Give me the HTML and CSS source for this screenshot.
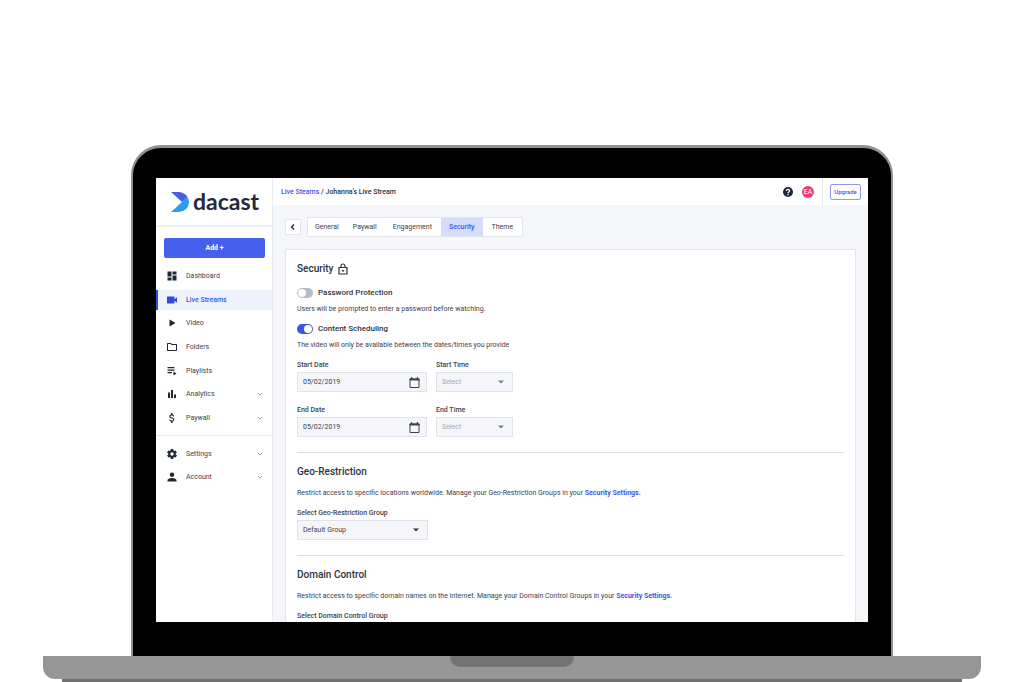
FILE: index.html
```html
<!DOCTYPE html>
<html lang="en">
<head>
<meta charset="utf-8">
<title>Dacast – Security</title>
<link rel="stylesheet" href="styles.css">
</head>
<body>
<div class="stage">
  <div class="lid">
    <div class="screen">
      <aside class="sidebar">
        <div class="brand">
          <svg class="brand-mark" viewBox="0 0 18 20" aria-hidden="true">
            <path fill="#2a9df0" d="M0 20 11 10 16 4.500Q18 7 18 10 17.500 19 8 20Z"/>
            <path fill="#4a5fe4" d="M0 0H8Q13.500 .5 16.300 4.500L11 10Z"/>
          </svg>
          <span class="brand-name">dacast</span>
        </div>
        <button class="add" type="button">Add +</button>
        <nav class="menu menu-main">
          <a class="item" href="#"><svg viewBox="0 0 24 24"><path d="M3 13h8V3H3v10zm0 8h8v-6H3v6zm10 0h8V11h-8v10zm0-18v6h8V3h-8z"/></svg><span>Dashboard</span></a>
          <a class="item active" href="#"><svg viewBox="0 0 24 24"><path d="M17 10.500V6c0-.6-.4-1-1-1H3c-.6 0-1 .4-1 1v12c0 .6.400 1 1 1h13c.6 0 1-.4 1-1v-4.500l5 4v-11z"/></svg><span>Live Streams</span></a>
          <a class="item" href="#"><svg viewBox="0 0 24 24"><path d="M7 5v14l12-7z"/></svg><span>Video</span></a>
          <a class="item" href="#"><svg viewBox="0 0 24 24"><path d="M9.200 6l2 2H20v10H4V6h5.200M10 4H4c-1.100 0-2 .9-2 2v12c0 1.100.900 2 2 2h16c1.100 0 2-.9 2-2V8c0-1.100-.9-2-2-2h-8z"/></svg><span>Folders</span></a>
          <a class="item" href="#"><svg viewBox="0 0 24 24"><path d="M3 4h14v2.500H3zM3 9h14v2.500H3zM3 14h9v2.500H3zM15 13l6 4-6 4z"/></svg><span>Playlists</span></a>
          <a class="item" href="#"><svg viewBox="0 0 24 24"><path d="M4 9h4v11H4zM10 4h4v16h-4zM16 13h4v7h-4z"/></svg><span>Analytics</span><svg class="chev" viewBox="0 0 6 6"><path d="M1 2l2 2 2-2"/></svg></a>
          <a class="item" href="#"><svg viewBox="0 0 24 24"><path d="M11.800 10.900c-2.270-.59-3-1.200-3-2.150 0-1.090 1.010-1.850 2.700-1.850 1.780 0 2.440.85 2.500 2.100h2.210c-.07-1.720-1.120-3.300-3.210-3.810V2h-3v3.160c-1.940.42-3.500 1.680-3.500 3.610 0 2.310 1.910 3.460 4.700 4.130 2.500.6 3 1.480 3 2.410 0 .69-.49 1.790-2.700 1.790-2.060 0-2.870-.92-2.980-2.100H6.320c.12 2.190 1.760 3.420 3.680 3.830V22h3v-3.150c1.950-.37 3.500-1.500 3.500-3.550 0-2.840-2.430-3.810-4.700-4.400z"/></svg><span>Paywall</span><svg class="chev" viewBox="0 0 6 6"><path d="M1 2l2 2 2-2"/></svg></a>
        </nav>
        <nav class="menu menu-more">
          <a class="item" href="#"><svg viewBox="0 0 24 24"><path fill-rule="evenodd" d="M19.400 13c.1-.7.100-1.300 0-2l2.100-1.600c.2-.2.200-.4.100-.6l-2-3.500c-.1-.2-.4-.3-.6-.2l-2.500 1c-.5-.4-1.100-.7-1.700-1l-.4-2.600c0-.3-.2-.5-.5-.5h-4c-.2 0-.4.200-.5.400l-.4 2.700c-.6.200-1.100.6-1.700 1l-2.500-1c-.2-.1-.5 0-.6.200l-2 3.500c-.1.200 0 .5.100.6L4.600 11c-.1.700-.1 1.300 0 2l-2.100 1.600c-.2.200-.2.400-.1.600l2 3.500c.1.200.4.300.6.200l2.500-1c.5.400 1.100.7 1.700 1l.4 2.600c0 .3.200.5.500.5h4c.2 0 .5-.2.500-.4l.4-2.700c.6-.2 1.100-.6 1.700-1l2.500 1c.2.100.5 0 .6-.2l2-3.500c.1-.2.100-.5-.1-.6zM12 15.500a3.500 3.500 0 110-7 3.500 3.500 0 010 7z"/></svg><span>Settings</span><svg class="chev" viewBox="0 0 6 6"><path d="M1 2l2 2 2-2"/></svg></a>
          <a class="item" href="#"><svg viewBox="0 0 24 24"><path d="M12 12a4.500 4.500 0 100-9 4.500 4.500 0 000 9zm0 2c-3 0-9 1.500-9 4.500V21h18v-2.500c0-3-6-4.500-9-4.500z"/></svg><span>Account</span><svg class="chev" viewBox="0 0 6 6"><path d="M1 2l2 2 2-2"/></svg></a>
        </nav>
      </aside>

      <div class="content">
        <header class="topbar">
          <div class="crumbs"><a href="#">Live Steams</a> / Johanna’s Live Stream</div>
          <svg class="help" viewBox="0 0 20 20" role="img" aria-label="Help"><circle cx="10" cy="10" r="10" fill="#1c2738"/><path d="M6.800 8a3.200 3.200 0 116.400 0c0 2-3.200 2.200-3.200 4.500" fill="none" stroke="#fff" stroke-width="2.400"/><circle cx="10" cy="15.500" r="1.500" fill="#fff"/></svg>
          <span class="avatar">EA</span>
          <div class="upgrade-slot"><button class="upgrade" type="button">Upgrade</button></div>
        </header>

        <div class="tabbar">
          <button class="back" type="button" aria-label="Back"><svg viewBox="0 0 8 8"><path d="M5 1.500L2.500 4 5 6.500"/></svg></button>
          <nav class="tabs">
            <a class="tab" href="#">General</a>
            <a class="tab" href="#">Paywall</a>
            <a class="tab tab-wide" href="#">Engagement</a>
            <a class="tab current" href="#">Security</a>
            <a class="tab tab-wide" href="#">Theme</a>
          </nav>
        </div>

        <main class="card">
          <section class="block">
            <h2>Security <svg class="lock" viewBox="0 0 10 12"><path d="M1 4.500h8v6.500H1zM3 4.500V3a2 2 0 014 0v1.500" fill="none" stroke="#2b3240" stroke-width="1.200"/><circle cx="5" cy="7.800" r="1" fill="#2b3240"/></svg></h2>
            <label class="toggle"><input type="checkbox" role="switch"><span>Password Protection</span></label>
            <p>Users will be prompted to enter a password before watching.</p>
            <label class="toggle toggle-next"><input type="checkbox" role="switch" checked><span>Content Scheduling</span></label>
            <p>The video will only be available between the dates/times you provide</p>
            <div class="fields">
              <div class="field">
                <label for="sd">Start Date</label>
                <div class="control"><input id="sd" type="text" value="05/02/2019"><svg class="cal" viewBox="0 0 10 11"><path d="M.5 2h9v8.500h-9z" fill="none" stroke="#3c424e"/><path d="M0 1.500h10V3.500H0zM1.500 0h1.200v2H1.500zM7.300 0h1.200v2H7.300z" fill="#3c424e"/></svg></div>
              </div>
              <div class="field">
                <label for="st">Start Time</label>
                <div class="control muted"><select id="st"><option>Select</option></select><svg class="caret" viewBox="0 0 6 4"><path d="M0 .5h6L3 3.500z"/></svg></div>
              </div>
              <div class="field">
                <label for="ed">End Date</label>
                <div class="control"><input id="ed" type="text" value="05/02/2019"><svg class="cal" viewBox="0 0 10 11"><path d="M.5 2h9v8.500h-9z" fill="none" stroke="#3c424e"/><path d="M0 1.500h10V3.500H0zM1.500 0h1.200v2H1.500zM7.300 0h1.200v2H7.300z" fill="#3c424e"/></svg></div>
              </div>
              <div class="field">
                <label for="et">End Time</label>
                <div class="control muted"><select id="et"><option>Select</option></select><svg class="caret" viewBox="0 0 6 4"><path d="M0 .5h6L3 3.500z"/></svg></div>
              </div>
            </div>
          </section>
          <section class="block">
            <h2>Geo-Restriction</h2>
            <p>Restrict access to specific locations worldwide. Manage your Geo-Restriction Groups in your <a href="#">Security Settings.</a></p>
            <div class="field field-single">
              <label for="geo">Select Geo-Restriction Group</label>
              <div class="control"><select id="geo"><option>Default Group</option></select><svg class="caret" viewBox="0 0 6 4"><path d="M0 .5h6L3 3.500z"/></svg></div>
            </div>
          </section>
          <section class="block">
            <h2>Domain Control</h2>
            <p>Restrict access to specific domain names on the internet. Manage your Domain Control Groups in your <a href="#">Security Settings.</a></p>
            <div class="field field-single">
              <label for="dom">Select Domain Control Group</label>
              <div class="control"><select id="dom"><option>Default Group</option></select><svg class="caret" viewBox="0 0 6 4"><path d="M0 .5h6L3 3.500z"/></svg></div>
            </div>
          </section>
        </main>
      </div>
    </div>
  </div>
  <div class="base"><div class="notch"></div></div>
  <div class="foot"></div>
</div>
</body>
</html>
```
FILE: styles.css
```css
* { box-sizing: border-box; }
body {
  margin: 0;
  background: #fff;
  font-family: Roboto, "Liberation Sans", sans-serif;
  font-size: 7px;
  line-height: 10px;
  color: #3c424e;
}
a { color: #3d55ea; text-decoration: none; }
button, input, select { font: inherit; color: inherit; margin: 0; }
svg { display: block; flex: none; }

/* Laptop */
.stage {
  display: flex;
  flex-direction: column;
  align-items: center;
  height: 100vh;
  padding-top: 145px;
  overflow: hidden;
}
.lid {
  flex: 1;
  min-height: 0;
  display: flex;
  width: calc(100% - 262px);
  padding: 30px 23px 34px;
  background: #000;
  border: 2px solid #929292;
  border-top-width: 3px;
  border-bottom: 0;
  border-radius: 30px 30px 0 0;
}
.screen {
  flex: 1;
  display: flex;
  overflow: hidden;
  background: #f5f6fa;
}
.base {
  display: flex;
  justify-content: center;
  width: calc(100% - 86px);
  height: 23px;
  background: #969696;
  border-radius: 0 0 12px 12px;
}
.notch {
  width: 124px;
  height: 11px;
  background: #737373;
  border-radius: 0 0 10px 10px;
}
.foot { width: calc(100% - 124px); height: 3px; background: #737070; }

/* Sidebar */
.sidebar {
  flex: none;
  width: 117px;
  background: #fff;
  border-right: 1px solid #e9ebf0;
}
.brand {
  display: flex;
  align-items: center;
  gap: 4px;
  height: 49px;
  padding-left: 15px;
  border-bottom: 2px solid #eeeff2;
}
.brand-mark { width: 18px; height: 20px; }
.brand-name {
  padding-bottom: 2px;
  font-family: Lato, sans-serif;
  font-size: 23px;
  font-weight: 700;
  line-height: 24px;
  color: #1f2a3a;
}
.add {
  display: block;
  width: calc(100% - 15px);
  height: 20px;
  margin: 11px 7px 8px 8px;
  padding: 0;
  border: 0;
  border-radius: 2px;
  background: #4660ee;
  color: #fff;
  font-weight: 700;
}
.menu { display: flex; flex-direction: column; justify-content: space-between; }
.menu-main { height: 162px; }
.menu-more {
  height: 52px;
  margin-top: 7px;
  padding-top: 8px;
  border-top: 1px solid #e6e8ee;
}
.item {
  display: flex;
  align-items: center;
  gap: 8px;
  height: 20px;
  padding: 0 9px 0 8px;
  border-left: 2px solid transparent;
  color: #3c424e;
}
.item svg { width: 12px; height: 12px; fill: #1f2735; }
.item .chev { width: 6px; height: 6px; margin-left: auto; fill: none; stroke: #9aa0aa; }
.item.active { background: #eef1fe; border-color: #3149e6; color: #3d55ea; font-weight: 500; }
.item.active svg { fill: #3149e6; }

/* Header */
.content { flex: 1; min-width: 0; display: flex; flex-direction: column; }
.topbar {
  flex: none;
  display: flex;
  align-items: center;
  height: 27px;
  padding-left: 8px;
  background: #fff;
}
.crumbs { margin-right: auto; font-weight: 500; color: #2b3240; }
.help { width: 10px; height: 10px; }
.avatar {
  width: 12px;
  margin: 0 8px 0 9px;
  border-radius: 6px;
  background: #ee3a77;
  color: #fff;
  line-height: 12px;
  text-align: center;
}
.upgrade-slot {
  display: flex;
  align-items: center;
  align-self: stretch;
  padding: 0 7px;
  border-left: 1px solid #e3e6ec;
}
.upgrade {
  width: 31px;
  height: 16px;
  padding: 0;
  border: 1px solid #8d9bee;
  border-radius: 2px;
  background: #fff;
  color: #3d55ea;
  font-size: 6px;
  font-weight: 500;
}

/* Tabs */
.tabbar { flex: none; display: flex; align-items: center; gap: 6px; padding: 12px 12px; }
.back {
  display: grid;
  place-items: center;
  width: 16px;
  height: 16px;
  padding: 0;
  border: 1px solid #e3e6ec;
  background: #fff;
}
.back svg { width: 8px; height: 8px; fill: none; stroke: #1f2735; stroke-width: 1.3; }
.tabs { display: flex; background: #fff; border: 1px solid #e3e6ec; }
.tab { padding: 0 7px; line-height: 18px; color: #3c424e; }
.tab-wide { padding: 0 9px; }
.tab.current { padding: 0 8px; background: #d5dcfd; color: #3d55ea; font-weight: 500; }

/* Settings card */
.card {
  flex: 1;
  min-height: 0;
  margin: 0 12px;
  padding: 0 11px;
  overflow: hidden;
  background: #fff;
  border: 1px solid #e3e6ec;
  border-bottom: 0;
}
.block { padding: 12px 0 15px; }
.block + .block { border-top: 1px solid #dfe1e6; }
h2 {
  display: flex;
  align-items: center;
  gap: 4px;
  margin: 0 0 9px;
  font-size: 10px;
  line-height: 14px;
  font-weight: 500;
  color: #2b3240;
}
.lock { width: 10px; height: 12px; }
p { margin: 0; }
p a { font-weight: 700; }
.toggle {
  display: flex;
  align-items: center;
  gap: 5px;
  margin: 12px 0 6px;
  font-size: 8px;
  font-weight: 500;
  color: #2b3240;
}
.toggle-next { margin-top: 10px; }
.toggle input {
  appearance: none;
  width: 16px;
  height: 10px;
  padding: 1px;
  border-radius: 5px;
  background: #b6bcc8;
}
.toggle input::before {
  content: "";
  display: block;
  width: 8px;
  height: 8px;
  border-radius: 4px;
  background: #fff;
}
.toggle input:checked { background: #3d55ea; }
.toggle input:checked::before { margin-left: auto; }
.fields {
  display: grid;
  grid-template-columns: 130px 77px;
  gap: 13px 9px;
  margin-top: 10px;
}
.field { display: grid; gap: 2px; }
.field label { font-weight: 500; }
.field-single { width: 131px; margin-top: 10px; }
.control { position: relative; height: 20px; }
.control input, .control select {
  appearance: none;
  width: 100%;
  height: 100%;
  padding: 0 5px;
  border: 1px solid #e0e3e9;
  border-radius: 0;
  background: #f5f6fa;
}
.cal { position: absolute; right: 7px; top: 5px; width: 11px; height: 11px; }
.caret { position: absolute; right: 9px; top: 8px; width: 6px; height: 4px; fill: #2b3240; }
.muted select { color: #a5a9b1; }
.muted .caret { fill: #7b808a; }
```
